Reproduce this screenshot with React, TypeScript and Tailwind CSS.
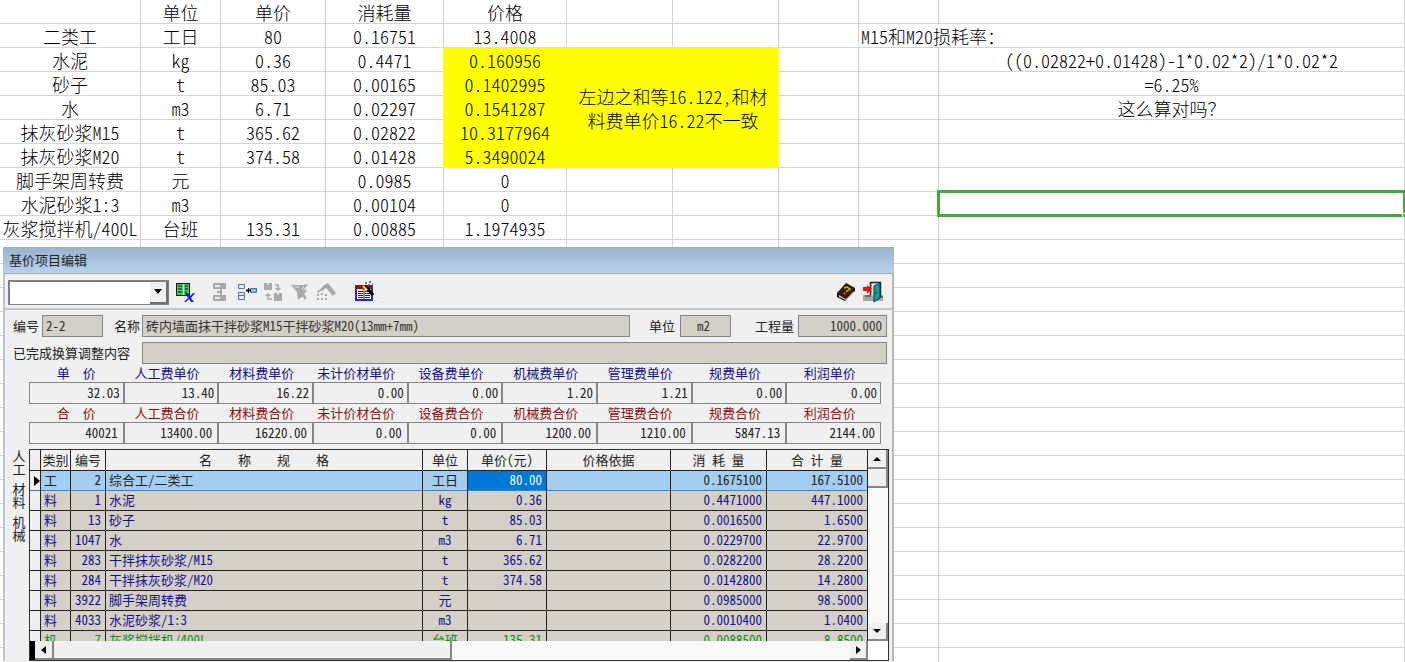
import clsx from "clsx";
import type { ReactNode } from "react";

const EMPTY_ROWS = 18;

const sheetRows = [
  ["", "单位", "单价", "消耗量", "价格"],
  ["二类工", "工日", "80", "0.16751", "13.4008"],
  ["水泥", "kg", "0.36", "0.4471", "0.160956"],
  ["砂子", "t", "85.03", "0.00165", "0.1402995"],
  ["水", "m3", "6.71", "0.02297", "0.1541287"],
  ["抹灰砂浆M15", "t", "365.62", "0.02822", "10.3177964"],
  ["抹灰砂浆M20", "t", "374.58", "0.01428", "5.3490024"],
  ["脚手架周转费", "元", "", "0.0985", "0"],
  ["水泥砂浆1:3", "m3", "", "0.00104", "0"],
  ["灰浆搅拌机/400L", "台班", "135.31", "0.00885", "1.1974935"],
];

const notes: Record<number, string> = {
  2: "((0.02822+0.01428)-1*0.02*2)/1*0.02*2",
  3: "=6.25%",
  4: "这么算对吗？",
};

// half-width spacing is on, so two wide spaces make one full-width gap
const unitPrices = [
  ["单　　价", "32.03"],
  ["人工费单价", "13.40"],
  ["材料费单价", "16.22"],
  ["未计价材单价", "0.00"],
  ["设备费单价", "0.00"],
  ["机械费单价", "1.20"],
  ["管理费单价", "1.21"],
  ["规费单价", "0.00"],
  ["利润单价", "0.00"],
];

const totalPrices = [
  ["合　　价", "40021"],
  ["人工费合价", "13400.00"],
  ["材料费合价", "16220.00"],
  ["未计价材合价", "0.00"],
  ["设备费合价", "0.00"],
  ["机械费合价", "1200.00"],
  ["管理费合价", "1210.00"],
  ["规费合价", "5847.13"],
  ["利润合价", "2144.00"],
];

const heads = ["", "类别", "编号", "名　　　　称　　　　规　　　　格", "单位", "单价(元)", "价格依据", "消 耗 量", "合 计 量"];

const items = [
  ["工", "2", "综合工/二类工", "工日", "80.00", "0.1675100", "167.5100"],
  ["料", "1", "水泥", "kg", "0.36", "0.4471000", "447.1000"],
  ["料", "13", "砂子", "t", "85.03", "0.0016500", "1.6500"],
  ["料", "1047", "水", "m3", "6.71", "0.0229700", "22.9700"],
  ["料", "283", "干拌抹灰砂浆/M15", "t", "365.62", "0.0282200", "28.2200"],
  ["料", "284", "干拌抹灰砂浆/M20", "t", "374.58", "0.0142800", "14.2800"],
  ["料", "3922", "脚手架周转费", "元", "", "0.0985000", "98.5000"],
  ["料", "4033", "水泥砂浆/1:3", "m3", "", "0.0010400", "1.0400"],
  ["机", "7", "灰浆搅拌机/400L", "台班", "135.31", "0.0088500", "8.8500"],
];

const Cell = ({ children, className }: { children?: ReactNode; className?: string }) => (
  <td className={clsx("h-6 border-r border-b px-0 pt-0.5 pb-0 whitespace-nowrap", className ?? "border-[#d4d4d4]")}>{children}</td>
);

const Sheet = () => (
  <table className="w-full table-fixed border-separate border-spacing-0 text-center text-[18px] leading-[21px] font-light">
    <colgroup>
      <col className="w-[141px]" />
      <col className="w-[80px]" />
      <col className="w-[105px]" />
      <col className="w-[118px]" />
      <col className="w-[123px]" />
      <col className="w-[106px]" />
      <col className="w-[106px]" />
      <col className="w-[80px]" />
      <col className="w-[80px]" />
      <col />
    </colgroup>
    <tbody>
      {sheetRows.map((row, i) => {
        const marked = i >= 2 && i <= 6;
        return (
          <tr key={i}>
            <Cell>{row[0]}</Cell>
            <Cell>{row[1]}</Cell>
            <Cell>{row[2]}</Cell>
            <Cell className={marked ? "border-r-[#ffff00] border-b-[#d4d4d4]" : undefined}>{row[3]}</Cell>
            <Cell className={clsx(marked ? "border-[#ffff00] bg-[#ffff00]" : i === 1 ? "border-r-[#d4d4d4] border-b-[#ffff00]" : "border-[#d4d4d4]")}>
              {row[4]}
            </Cell>
            {i === 2 && (
              <td colSpan={2} rowSpan={5} className="bg-[#ffff00] px-2 py-0 leading-6">
                左边之和等16.122,和材
                <br />
                料费单价16.22不一致
              </td>
            )}
            {!marked && (
              <>
                <Cell className={i === 1 ? "border-r-[#d4d4d4] border-b-[#ffff00]" : undefined} />
                <Cell className={i === 1 ? "border-r-[#d4d4d4] border-b-[#ffff00]" : undefined} />
              </>
            )}
            <Cell />
            {i === 1 ? (
              <td colSpan={2} className="h-6 border-r border-b border-[#d4d4d4] pt-0.5 pr-0 pb-0 pl-[2px] text-left">
                M15和M20损耗率：
              </td>
            ) : (
              <>
                <Cell />
                <Cell className={i === 8 ? "relative border-[#d4d4d4]" : undefined}>
                  {notes[i]}
                  {i === 8 && (
                    <div className="absolute -top-0.5 -right-0.5 -bottom-0.5 -left-0.5 border-3 border-[#43a63f]">
                      <span className="absolute -right-[3px] -bottom-[3px] size-1 border-t border-l border-white bg-[#43a63f]" />
                    </div>
                  )}
                </Cell>
              </>
            )}
          </tr>
        );
      })}
      {Array.from({ length: EMPTY_ROWS }, (_, i) => (
        <tr key={i}>
          {Array.from({ length: 10 }, (_, j) => (
            <Cell key={j} />
          ))}
        </tr>
      ))}
    </tbody>
  </table>
);

const ToolButton = ({ label, children, className }: { label: string; children: ReactNode; className?: string }) => (
  <button type="button" aria-label={label} className={clsx("shrink-0", className)}>
    <svg width="20" height="22" viewBox="0 0 20 22" fill="none">
      {children}
    </svg>
  </button>
);

const Toolbar = () => (
  <div className="flex h-9 items-center border-b-2 border-[#c6c6c6] pt-0.5 pr-[9px] pl-[3px]">
    <div className="flex h-[25px] w-[161px] border border-t-2 border-l-2 border-[#808080] bg-white">
      <input aria-label="查找" className="h-full min-w-0 flex-1 px-1 outline-none" />
      <button
        type="button"
        aria-label="展开"
        className="flex w-[18px] items-center justify-center border-r-2 border-b-2 border-[#707070] bg-[#f0f0f0]">
        <svg width="8" height="5">
          <path d="M0 0h8L4 5z" fill="#000" />
        </svg>
      </button>
    </div>
    <ToolButton label="删除表格" className="ml-[6px]">
      <path d="M1 2h14v13H1z" fill="#111" />
      <path d="M2 3h12v11H2z" fill="#4fc75c" />
      <path d="M3 5h4M3 8h4M3 11h4M10 5h3M10 8h3M10 11h2" stroke="#063" strokeWidth="1.500" />
      <path d="M8.500 3v11" stroke="#c5efc8" />
      <path d="M10 12h3l2 3 3-3h2l-4 5 3 4h-3l-2-3-3 3h-2l4-4z" fill="#1a24e0" />
    </ToolButton>
    <ToolButton label="合并" className="ml-[15px]">
      <path d="M3 2h13v6H3zM3 14h13v6H3z" fill="#a9a9a9" />
      <path d="M5 5h5M5 17h5" stroke="#eee" strokeWidth="2" />
      <path d="M11 8v6M7 11h4" stroke="#a9a9a9" strokeWidth="2" />
    </ToolButton>
    <ToolButton label="插入" className="ml-[7px]">
      <path d="M1.500 3.500h6v4h-6zM1.500 11.500h6v3h-6zM1.500 14.500h6v4h-6z" fill="#dce9f7" stroke="#5573a0" />
      <path d="M13.500 7.500h6v4h-6z" fill="#8fb5e4" stroke="#5573a0" />
      <path d="M9 9.500h5" stroke="#111" strokeWidth="2" />
      <path d="M11.500 7v5" stroke="#111" />
    </ToolButton>
    <ToolButton label="替换" className="ml-[6px]">
      <path d="M1 2h8v7H1zM11 12h8v8h-8z" fill="#a9a9a9" />
      <path d="M4 2h2v2H4zM14 12h2v2h-2z" fill="#ddd" />
      <path d="M12 4h3v5M12.500 7l2.500 2 2.500-2M9 18H5v-5M2.500 15l2.500-2 2.500 2" stroke="#a9a9a9" strokeWidth="1.500" />
    </ToolButton>
    <ToolButton label="清除筛选" className="ml-[7px]">
      <path d="M1 4h12l5-1-5 7 3 7-4-3-4 5-1-8z" fill="#a9a9a9" />
      <path d="M9 10l7 8M16 9l-7 8" stroke="#a9a9a9" strokeWidth="2.500" />
      <path d="M5 6h4M12 8l2-2" stroke="#e8e8e8" />
    </ToolButton>
    <ToolButton label="换算" className="ml-[6px]">
      <path d="M8 4l4-2 8 10-3 3-7-8-4 3H3z" fill="#a9a9a9" />
      <path d="M1 11l4-2" stroke="#a9a9a9" strokeWidth="1.500" />
      <path d="M1 14h2M5 13h2M1 18h2M5 18h2M9 18h2M9 14h2" stroke="#a9a9a9" strokeWidth="2" />
    </ToolButton>
    <ToolButton label="报表" className="ml-[18px]">
      <path d="M2 5h16v14H2z" fill="#fff" stroke="#2222e0" strokeWidth="2" />
      <path d="M1 4h16v4H1z" fill="#991018" />
      <path d="M4 10.500h5M4 12.500h5M4 14.500h5M4 16.500h5M11 10.500h5M11 12.500h5M11 14.500h5M11 16.500h5M10 8v11" stroke="#222" />
      <path d="M11 5l8 9" stroke="#000" strokeWidth="3" />
      <path d="M9 5l4 4" stroke="#f6e800" strokeWidth="2" />
      <path d="M11 2h2M15 1h2M14 4h2M18 3h1M18 6h1" stroke="#555" strokeWidth="1.500" />
    </ToolButton>
    <ToolButton label="帮助" className="ml-auto">
      <path d="M1 12L10 2l9 5v3L9 20l-8-4z" fill="#17100a" />
      <path d="M2 12l8-9 8 5-8 9z" fill="#48190c" />
      <path d="M3 14l7 4 8-8v2l-8 7-7-3z" fill="#cbd9a0" />
      <path d="M8 7l3-1 3 2-3 2-1 1M8 12l1 1" stroke="#a8d511" strokeWidth="1.500" />
    </ToolButton>
    <ToolButton label="退出" className="ml-[7px]">
      <path d="M0 14h20v6H0z" fill="#a6a6a6" />
      <path d="M7.500 14V1.500h10V16" fill="#dcdcdc" stroke="#222" strokeWidth="1.500" />
      <path d="M11 5l6-3v15l-6 4z" fill="#159c9f" stroke="#063e46" />
      <path d="M13 11v2" stroke="#032" />
      <path d="M0 6h4V4l5 4-5 5v-3H0z" fill="#ec1111" />
      <path d="M2 15h6M17 16h3" stroke="#333" />
    </ToolButton>
  </div>
);

const fieldClass = "h-[22px] border border-[#858585] bg-[#d4d0c8] pb-0.5 text-[#333] outline-none";

const Fields = () => (
  <div className="pt-[5px] pr-[5px] pl-2">
    <div className="flex items-center">
      <label htmlFor="code" className="w-[29px] shrink-0">编号</label>
      <input id="code" readOnly value="2-2" className={clsx(fieldClass, "w-[61px] px-[3px]")} />
      <label htmlFor="name" className="ml-[11px] w-7 shrink-0">名称</label>
      <input
        id="name"
        readOnly
        value="砖内墙面抹干拌砂浆M15干拌砂浆M20(13mm+7mm)"
        className={clsx(fieldClass, "min-w-0 flex-1 px-[3px]")}
      />
      <label htmlFor="unit" className="ml-[19px] w-[31px] shrink-0">单位</label>
      <input id="unit" readOnly value="m2" className={clsx(fieldClass, "w-[51px] pr-1 text-center")} />
      <label htmlFor="quantity" className="ml-6 w-[43px] shrink-0">工程量</label>
      <input id="quantity" readOnly value="1000.000" className={clsx(fieldClass, "w-[89px] px-1 text-right")} />
    </div>
    <div className="mt-[5px] flex items-center">
      <label htmlFor="adjust" className="w-[129px] shrink-0">已完成换算调整内容</label>
      <input id="adjust" readOnly className={clsx(fieldClass, "min-w-0 flex-1 px-1")} />
    </div>
  </div>
);

const PriceRow = ({ prices, id, color, padding }: { prices: string[][]; id: string; color: string; padding: string }) => (
  <div className="mr-[11px] ml-6 grid grid-cols-9">
    {prices.map(([label, value], i) => (
      <div key={label} className="flex flex-col">
        <label htmlFor={`${id}-${i}`} className={clsx("pr-2 text-center leading-[18px] whitespace-nowrap", i === 0 && "pl-2", color)}>
          {label}
        </label>
        <input
          id={`${id}-${i}`}
          readOnly
          value={value}
          className={clsx("h-[22px] w-full border border-[#858585] pb-0.5 text-right text-[#222] outline-none", padding)}
        />
      </div>
    ))}
  </div>
);

const ItemTable = () => (
  <table className="w-full table-fixed border-separate border-spacing-0">
    <colgroup>
      <col className="w-[11px]" />
      <col className="w-[30px]" />
      <col className="w-[35px]" />
      <col />
      <col className="w-[45px]" />
      <col className="w-[79px]" />
      <col className="w-[124px]" />
      <col className="w-[96px]" />
      <col className="w-[101px]" />
    </colgroup>
    <thead>
      <tr>
        {heads.map((head, i) => (
          <th key={i} className="h-[21px] border-r border-b border-[#222] p-0 leading-5 font-normal whitespace-nowrap">
            {head}
          </th>
        ))}
      </tr>
    </thead>
    <tbody>
      {items.map(([kind, code, name, unit, price, usage, total], i) => {
        const selected = i === 0;
        const cell = clsx(
          "h-5 border-r border-b border-r-[#222] pt-0 pb-0.5 leading-[17px] whitespace-nowrap",
          selected ? "border-b-[#2f86c8]" : "border-b-[#222]",
        );
        return (
          <tr
            key={code}
            className={clsx(
              selected ? "bg-[#a3cef0] text-[#222]" : "bg-[#d4d0c8]",
              !selected && (kind === "机" ? "text-[#138a13]" : "text-[#10108a]"),
            )}>
            <td className={clsx(cell, "bg-[#f0f0f0] px-0")}>
              {selected && (
                <svg width="6" height="10" className="mt-0.5 ml-[4px]">
                  <path d="M0 0l6 5-6 5z" fill="#000" />
                </svg>
              )}
            </td>
            <td className={clsx(cell, "pr-0 pl-[3px]")}>{kind}</td>
            <td className={clsx(cell, "pr-1 pl-0 text-right")}>{code}</td>
            <td className={clsx(cell, "pr-0 pl-[3px]")}>{name}</td>
            <td className={clsx(cell, "px-0 text-center")}>{unit}</td>
            <td className={clsx(cell, "pr-1 pl-0 text-right", selected && "bg-[#0078d7] text-white")}>{price}</td>
            <td className={cell} />
            <td className={clsx(cell, "pr-1 pl-0 text-right")}>{usage}</td>
            <td className={clsx(cell, "pr-1 pl-0 text-right")}>{total}</td>
          </tr>
        );
      })}
    </tbody>
  </table>
);

const scrollButton = "flex shrink-0 items-center justify-center border-r-2 border-b-2 border-[#858585] bg-[#f0f0f0]";

const ItemPanel = () => (
  <div className="mt-[5px] mr-[3px] flex">
    <div className="flex w-6 shrink-0 flex-col items-center gap-[7px] pl-1 text-center leading-[13px]">
      {["人工", "材料", "机械"].map((tab) => (
        <button key={tab} type="button" className="w-[14px]">
          {tab}
        </button>
      ))}
    </div>
    <div className="min-w-0 flex-1 border border-[#333]">
      <div className="flex h-[191px] overflow-hidden">
        <div className="min-w-0 flex-1">
          <ItemTable />
        </div>
        <div className="flex w-5 shrink-0 flex-col bg-[#f8f8f8]">
          <button type="button" aria-label="向上" className={clsx(scrollButton, "h-[19px]")}>
            <svg width="8" height="4">
              <path d="M0 4h8L4 0z" fill="#000" />
            </svg>
          </button>
          <div className="h-[19px] border-r-2 border-b-2 border-[#858585] bg-[#f0f0f0]" />
          <button type="button" aria-label="向下" className={clsx(scrollButton, "mt-auto h-[18px]")}>
            <svg width="8" height="4">
              <path d="M0 0h8L4 4z" fill="#000" />
            </svg>
          </button>
        </div>
      </div>
      <div className="flex h-[19px] bg-[#f8f8f8]">
        <div className="w-[5px] shrink-0 bg-black" />
        <button type="button" aria-label="向左" className={clsx(scrollButton, "w-[19px]")}>
          <svg width="5" height="8">
            <path d="M5 0v8L0 4z" fill="#000" />
          </svg>
        </button>
        <div className="w-[398px] border-r-2 border-b-2 border-[#858585] bg-[#f0f0f0]" />
        <button type="button" aria-label="向右" className={clsx(scrollButton, "ml-auto w-[18px]")}>
          <svg width="5" height="8">
            <path d="M0 0v8l5-4z" fill="#000" />
          </svg>
        </button>
        <div className="w-5 shrink-0 bg-white" />
      </div>
    </div>
  </div>
);

const PriceDialog = () => (
  <section
    aria-labelledby="dialog-title"
    className="absolute top-[247px] left-[3px] w-[891px] bg-[#f0f0f0] pb-4 text-[13px] leading-[18px] text-[#222]">
    <h2
      id="dialog-title"
      className="h-[26px] bg-linear-to-b from-[#98b2cf] to-[#b8d1eb] pl-[6px] text-[13px] leading-[26px] font-normal">
      基价项目编辑
    </h2>
    <div className="border-x-2 border-t border-t-[#a9a9a9] border-r-[#b9b9b9] border-l-[#b6c4d4]">
      <Toolbar />
      <Fields />
      <PriceRow prices={unitPrices} id="unit-price" color="text-[#10108a]" padding="px-[3px]" />
      <PriceRow prices={totalPrices} id="total-price" color="text-[#8b1010]" padding="px-[5px]" />
      <ItemPanel />
    </div>
  </section>
);

const App = () => {
  return (
    <main className="relative h-screen overflow-hidden bg-white font-['Noto_Sans_CJK_SC',sans-serif] text-black [font-feature-settings:'hwid']">
      <Sheet />
      <PriceDialog />
    </main>
  );
};

export default App;
